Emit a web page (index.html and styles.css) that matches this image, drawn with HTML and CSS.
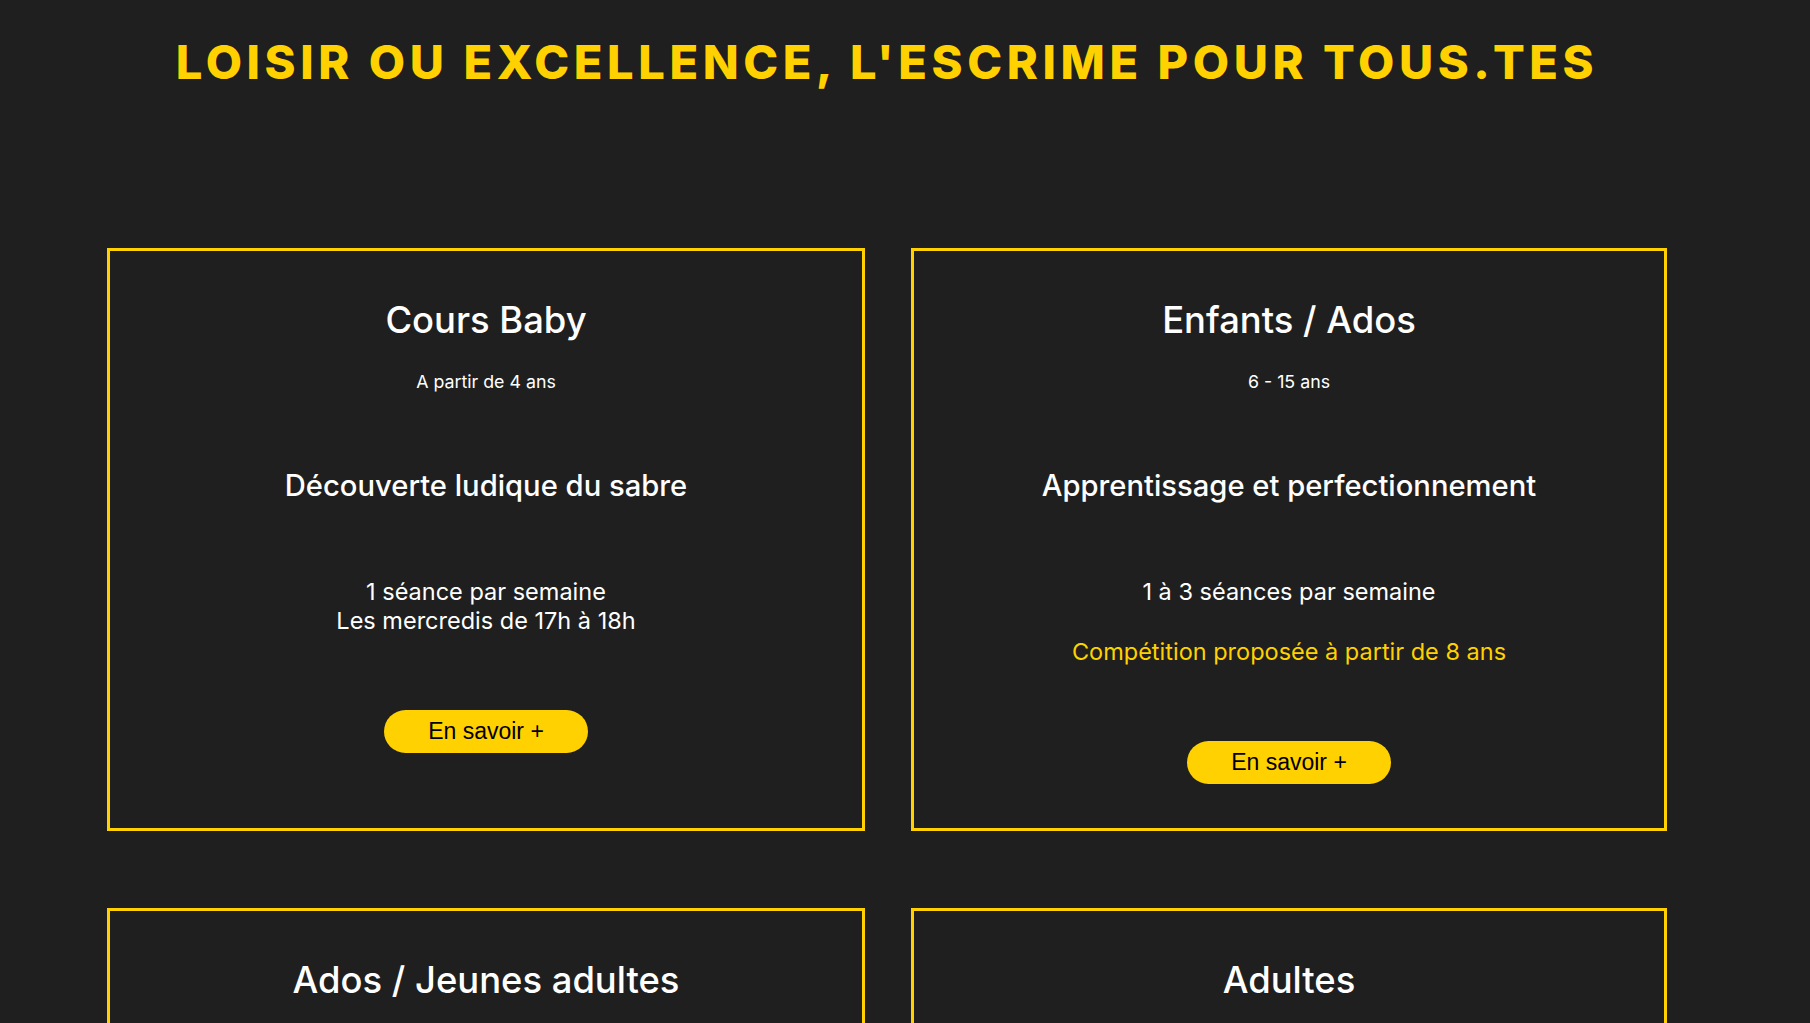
FILE: index.html
```html
<!DOCTYPE html>
<html lang="fr">
<head>
<meta charset="utf-8">
<title>Loisir ou excellence</title>
<link rel="stylesheet" href="styles.css">
</head>
<body>
<main class="page">
  <h1 class="headline">Loisir ou excellence, l'escrime pour tous.tes</h1>
  <section class="grid">
    <article class="card">
      <h2 class="card-title">Cours Baby</h2>
      <p class="card-age">A partir de 4 ans</p>
      <p class="card-lead">Découverte ludique du sabre</p>
      <p class="card-sched">1 séance par semaine<br>Les mercredis de 17h à 18h</p>
      <a class="btn" href="#">En savoir +</a>
    </article>
    <article class="card">
      <h2 class="card-title">Enfants / Ados</h2>
      <p class="card-age">6 - 15 ans</p>
      <p class="card-lead">Apprentissage et perfectionnement</p>
      <p class="card-sched">1 à 3 séances par semaine</p>
      <p class="card-note">Compétition proposée à partir de 8 ans</p>
      <a class="btn" href="#">En savoir +</a>
    </article>
    <article class="card">
      <h2 class="card-title">Ados / Jeunes adultes</h2>
      <p class="card-age">15 - 25 ans</p>
      <p class="card-lead">Pratique loisir ou compétition</p>
    </article>
    <article class="card">
      <h2 class="card-title">Adultes</h2>
      <p class="card-age">A partir de 18 ans</p>
      <p class="card-lead">Pratique loisir</p>
    </article>
  </section>
</main>
</body>
</html>
```
FILE: styles.css
```css
html, body {
  margin: 0;
  padding: 0;
  background: #1f1f1f;
}
body {
  font-family: Inter, "Noto Sans", sans-serif;
  color: #ffffff;
}
.page {
  width: 1560px;
  margin-left: 107px;
  padding-top: 34px;
}
.headline {
  margin: 0;
  text-align: center;
  text-transform: uppercase;
  color: #ffd100;
  font-family: Inter, sans-serif;
  font-weight: 800;
  font-size: 47px;
  line-height: 56px;
  letter-spacing: 4.6px;
}
.grid {
  margin-top: 158px;
  display: grid;
  grid-template-columns: 758px 756px;
  column-gap: 46px;
  row-gap: 77px;
}
.card {
  border: 3px solid #ffd100;
  padding: 48px 20px 44px;
  display: flex;
  flex-direction: column;
  align-items: center;
  text-align: center;
}
.card-title {
  margin: 0;
  font-weight: 500;
  font-size: 36.4px;
  line-height: 43px;
}
.card-age {
  margin: 28px 0 0;
  font-size: 17.8px;
  line-height: 24px;
}
.card-lead {
  margin: 76px 0 0;
  font-weight: 500;
  font-size: 29.2px;
  line-height: 32px;
}
.card-sched {
  margin: 75px 0 0;
  font-size: 23.5px;
  line-height: 29px;
}
.card-note {
  margin: 31px 0 0;
  font-size: 23.5px;
  line-height: 29px;
  color: #ffd100;
}
.btn {
  margin-top: 75px;
  width: 204px;
  height: 43px;
  border-radius: 22px;
  background: #ffd100;
  color: #000;
  text-decoration: none;
  font-family: "Liberation Sans", Arial, sans-serif;
  font-size: 23px;
  display: flex;
  align-items: center;
  justify-content: center;
}
```
